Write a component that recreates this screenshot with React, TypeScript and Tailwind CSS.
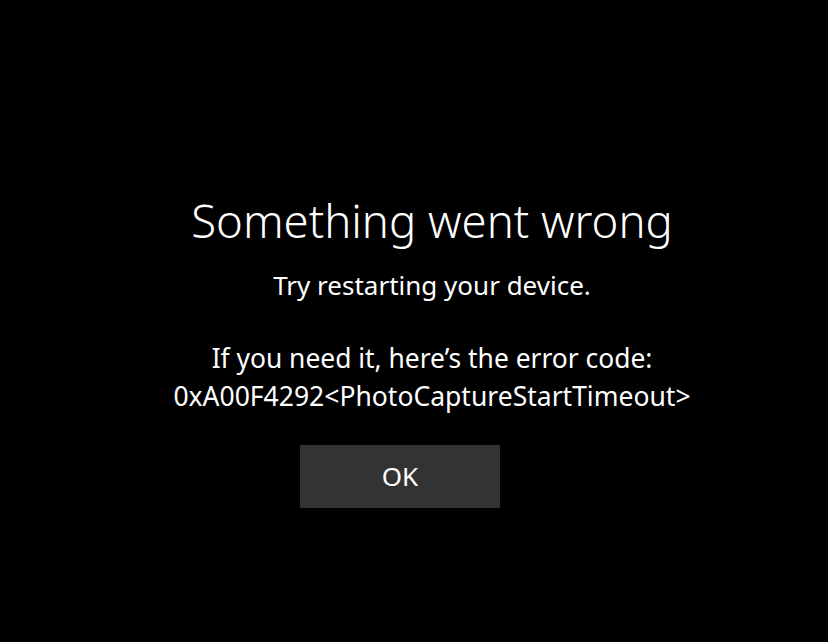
import React from 'react';

const App: React.FC = () => {
    return (
        <div className="w-full h-[642px] bg-black text-white flex flex-col items-center pl-[36px] pt-[192px] font-['Noto_Sans',_'Open_Sans',_sans-serif]">
            <h1 className="text-[45.5px] leading-[56px] font-light">Something went wrong</h1>
            <p className="text-[26px] leading-[38px] mt-[18px]">Try restarting your device.</p>
            <p className="text-[26.4px] leading-[38px] mt-[35px]">If you need it, here’s the error code:</p>
            <p className="text-[26.5px] leading-[38px]">0xA00F4292&lt;PhotoCaptureStartTimeout&gt;</p>
            <button className="mt-[30px] mr-[64px] w-[200px] h-[63px] bg-[#333333] text-[26px] text-white">OK</button>
        </div>
    );
};

export default App;
